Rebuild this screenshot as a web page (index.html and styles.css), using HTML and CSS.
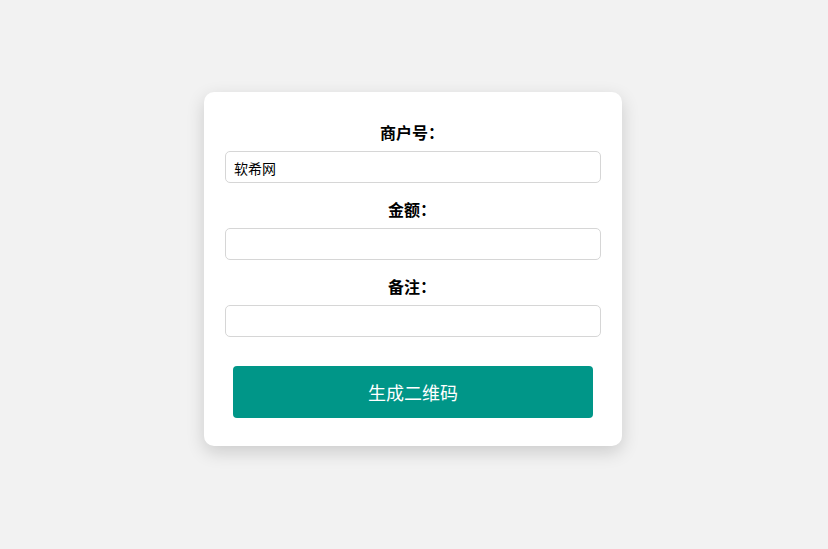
FILE: index.html
```html
<!DOCTYPE html>
<html lang="zh-CN">
<head>
<meta charset="utf-8">
<title>生成二维码</title>
<link rel="stylesheet" href="styles.css">
</head>
<body>
<div class="card">
  <form class="form">
    <label class="label" for="merchant">商户号：</label>
    <input class="field" id="merchant" type="text" value="软希网">
    <label class="label" for="amount">金额：</label>
    <input class="field" id="amount" type="text">
    <label class="label" for="note">备注：</label>
    <input class="field" id="note" type="text">
    <button class="btn" type="button">生成二维码</button>
  </form>
</div>
</body>
</html>
```

FILE: styles.css
```css
html, body {
  margin: 0;
  padding: 0;
  background: #f2f2f2;
  font-family: "Noto Sans CJK SC", "Noto Sans", "Liberation Sans", sans-serif;
}
body {
  min-height: 549px;
  box-sizing: border-box;
  padding-top: 92px;
}
.card {
  box-sizing: border-box;
  width: 418px;
  margin: 0 0 0 204px;
  padding: 29px 21px 28px 21px;
  background: #ffffff;
  border-radius: 10px;
  box-shadow: 0 6px 18px rgba(0, 0, 0, 0.16);
}
.form {
  display: flex;
  flex-direction: column;
}
.label {
  display: block;
  text-align: center;
  font-size: 16px;
  font-weight: bold;
  color: #000;
  line-height: 22px;
  margin: 0 0 8px 0;
  padding-right: 2px;
}
.field + .label {
  margin-top: 15px;
}
.field {
  box-sizing: border-box;
  width: 100%;
  height: 32px;
  border: 1px solid #d6d6d6;
  border-radius: 5px;
  padding: 1px 8px 0 8px;
  font-size: 14px;
  font-family: "Noto Sans CJK SC", "Noto Sans", "Liberation Sans", sans-serif;
  color: #000;
  background: #fff;
  outline: none;
}
.btn {
  box-sizing: border-box;
  margin: 29px 8px 0 8px;
  height: 52px;
  border: none;
  border-radius: 4px;
  background: #009688;
  color: #fff;
  font-size: 18px;
  font-family: "Noto Sans CJK SC", "Noto Sans", "Liberation Sans", sans-serif;
  cursor: pointer;
}
```
